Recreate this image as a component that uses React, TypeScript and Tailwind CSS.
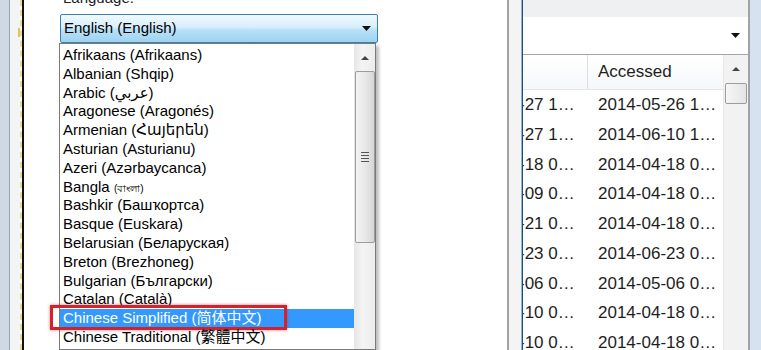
import React from 'react';

const langs: React.ReactNode[] = [
  'Afrikaans (Afrikaans)',
  'Albanian (Shqip)',
  'Arabic (عربي)',
  'Aragonese (Aragonés)',
  'Armenian (Հայերեն)',
  'Asturian (Asturianu)',
  'Azeri (Azərbaycanca)',
  <>Bangla <span className="text-[10px]">(বাংলা)</span></>,
  'Bashkir (Башҡортса)',
  'Basque (Euskara)',
  'Belarusian (Беларуская)',
  'Breton (Brezhoneg)',
  'Bulgarian (Български)',
  'Catalan (Català)',
  'Chinese Simplified (简体中文)',
  'Chinese Traditional (繁體中文)',
  'Corsican (Corsu)',
];

const rows = [
  ['-27 1…', '2014-05-26 1…'],
  ['-27 1…', '2014-06-10 1…'],
  ['-18 0…', '2014-04-18 0…'],
  ['-09 0…', '2014-04-18 0…'],
  ['-21 0…', '2014-04-18 0…'],
  ['-23 0…', '2014-06-23 0…'],
  ['-06 0…', '2014-05-06 0…'],
  ['-10 0…', '2014-04-18 0…'],
  ['-10 0…', '2014-04-18 0…'],
];

const DownArrow = () => (
  <svg width="9" height="5" viewBox="0 0 9 5">
    <path d="M0 0h9L4.5 5z" fill="#111" />
  </svg>
);

const UpArrow = () => (
  <svg width="8" height="4" viewBox="0 0 8 4">
    <path d="M0 4h8L4 0z" fill="#444" />
  </svg>
);

const Grip = () => (
  <div className="flex flex-col gap-[2px] w-[8px]">
    <div className="h-[1px] bg-[#555]" />
    <div className="h-[1px] bg-[#555]" />
    <div className="h-[1px] bg-[#555]" />
    <div className="h-[1px] bg-[#555]" />
  </div>
);

export default function App() {
  return (
    <div
      className="w-[761px] h-[350px] overflow-hidden flex bg-white text-black"
      style={{ fontFamily: '"Liberation Sans", "DejaVu Sans", "Noto Sans CJK SC", sans-serif' }}
    >
      {/* window frame behind, left */}
      <div className="flex w-[25px] shrink-0">
        <div className="w-[9px] bg-[#cfd9e4]" />
        <div className="w-[1px] bg-[#9aa3ad]" />
        <div className="w-[10px] bg-[#f3f4f5] flex flex-col">
          <div className="h-[28px] shrink-0" />
          <div className="h-[9px] shrink-0 ml-[8px] w-[2px] bg-[#e6c35a]" />
        </div>
        <div className="w-[2px] border-l-2 border-dashed border-[#e8dc9a]" />
        <div className="w-[2px] bg-[#111]" />
        <div className="w-[1px] bg-white" />
      </div>

      {/* options dialog */}
      <div className="w-[482px] shrink-0 bg-white pl-[35px] flex flex-col min-h-0">
        <div className="h-[14px] shrink-0 overflow-hidden flow-root">
          <div className="-mt-[11px] text-[15px] leading-[18px] pl-[3px] text-[#222]">Language:</div>
        </div>
        <div className="w-[318px] h-[29px] shrink-0 border border-[#3c7fb1] rounded-[2px] bg-[linear-gradient(to_bottom,#f0f9fe_0%,#d8effc_45%,#b9e1f7_55%,#9ed2f0_100%)] flex items-center justify-between pl-[3px] pr-[6px] text-[15px]">
          <span>English (English)</span>
          <DownArrow />
        </div>
        <div className="-ml-[1px] w-[317px] flex-1 min-h-0 border border-[#7a7a7a] bg-white flex shadow-[3px_3px_3px_rgba(0,0,0,0.25)]">
          <div className="flex-1 flex flex-col relative pt-[2px]">
            {langs.map((l, i) => {
              const sel = i === 14;
              return (
                <div
                  key={i}
                  className={`h-[18.8px] shrink-0 leading-[18.8px] text-[15px] pl-[3px] whitespace-nowrap relative ${
                    sel ? 'bg-[#3399ff] text-white' : ''
                  }`}
                >
                  {l}
                  {sel && (
                    <div className="absolute -left-[10px] -top-[4px] w-[237px] h-[25px] border-[3px] border-[#d2232c] shadow-[0_0_3px_rgba(180,30,40,0.6)]" />
                  )}
                </div>
              );
            })}
          </div>
          <div className="w-[21px] shrink-0 bg-[linear-gradient(to_right,#e6e6e6,#f4f4f4_40%,#ececec)] flex flex-col items-center">
            <div className="h-[27px] shrink-0 flex items-center justify-center">
              <UpArrow />
            </div>
            <div className="w-[20px] h-[172px] shrink-0 rounded-[2px] border border-[#9c9c9c] bg-[linear-gradient(to_right,#f4f4f4,#e8e8e8_50%,#d6d6d6)] flex items-center justify-center">
              <Grip />
            </div>
          </div>
        </div>
      </div>

      {/* gap between windows */}
      <div className="w-[2px] shrink-0 bg-[#a3a3a3]" />
      <div className="w-[12px] shrink-0 bg-[#f4f4f4]" />
      <div className="w-[1px] shrink-0 bg-[#8fb4d4]" />
      <div className="w-[1px] shrink-0 bg-[#1f4f78]" />

      {/* explorer window */}
      <div className="w-[225px] shrink-0 flex flex-col bg-white min-h-0">
        <div className="h-[17px] shrink-0 bg-[#eef0f2]" />
        <div className="h-[38px] shrink-0 border-b border-[#a6a6a6] bg-white flex items-center justify-end pr-[8px]">
          <DownArrow />
        </div>
        <div className="flex-1 min-h-0 flex">
          <div className="flex-1 flex flex-col overflow-hidden">
            <div className="h-[35px] shrink-0 flex border-b border-[#e5e5e5] bg-[linear-gradient(to_bottom,#ffffff,#f6f7f9)] text-[17px] text-[#1e1e1e]">
              <div className="w-[65px] border-r border-[#dedede]" />
              <div className="flex-1 flex items-center pl-[10px]">Accessed</div>
            </div>
            {rows.map((r, i) => (
              <div key={i} className="h-[29.75px] shrink-0 flex items-center text-[17px] text-[#1e1e1e] whitespace-nowrap">
                <div className="w-[65px] overflow-hidden">
                  <span className="block -ml-[4px]">{r[0]}</span>
                </div>
                <div className="flex-1 pl-[10px]">{r[1]}</div>
              </div>
            ))}
          </div>
          <div className="w-[25px] shrink-0 bg-[#f2f2f2] border-l border-[#e8e8e8] flex flex-col items-center">
            <div className="h-[28px] shrink-0 flex items-center justify-center">
              <UpArrow />
            </div>
            <div className="w-[22px] h-[21px] shrink-0 rounded-[2px] border border-[#9c9c9c] bg-[linear-gradient(to_right,#f6f6f6,#e4e4e4)]" />
          </div>
        </div>
      </div>

      <div className="w-[2px] shrink-0 bg-[#a3a3a3]" />
      <div className="flex-1 bg-[#d6e2ef]" />
    </div>
  );
}
